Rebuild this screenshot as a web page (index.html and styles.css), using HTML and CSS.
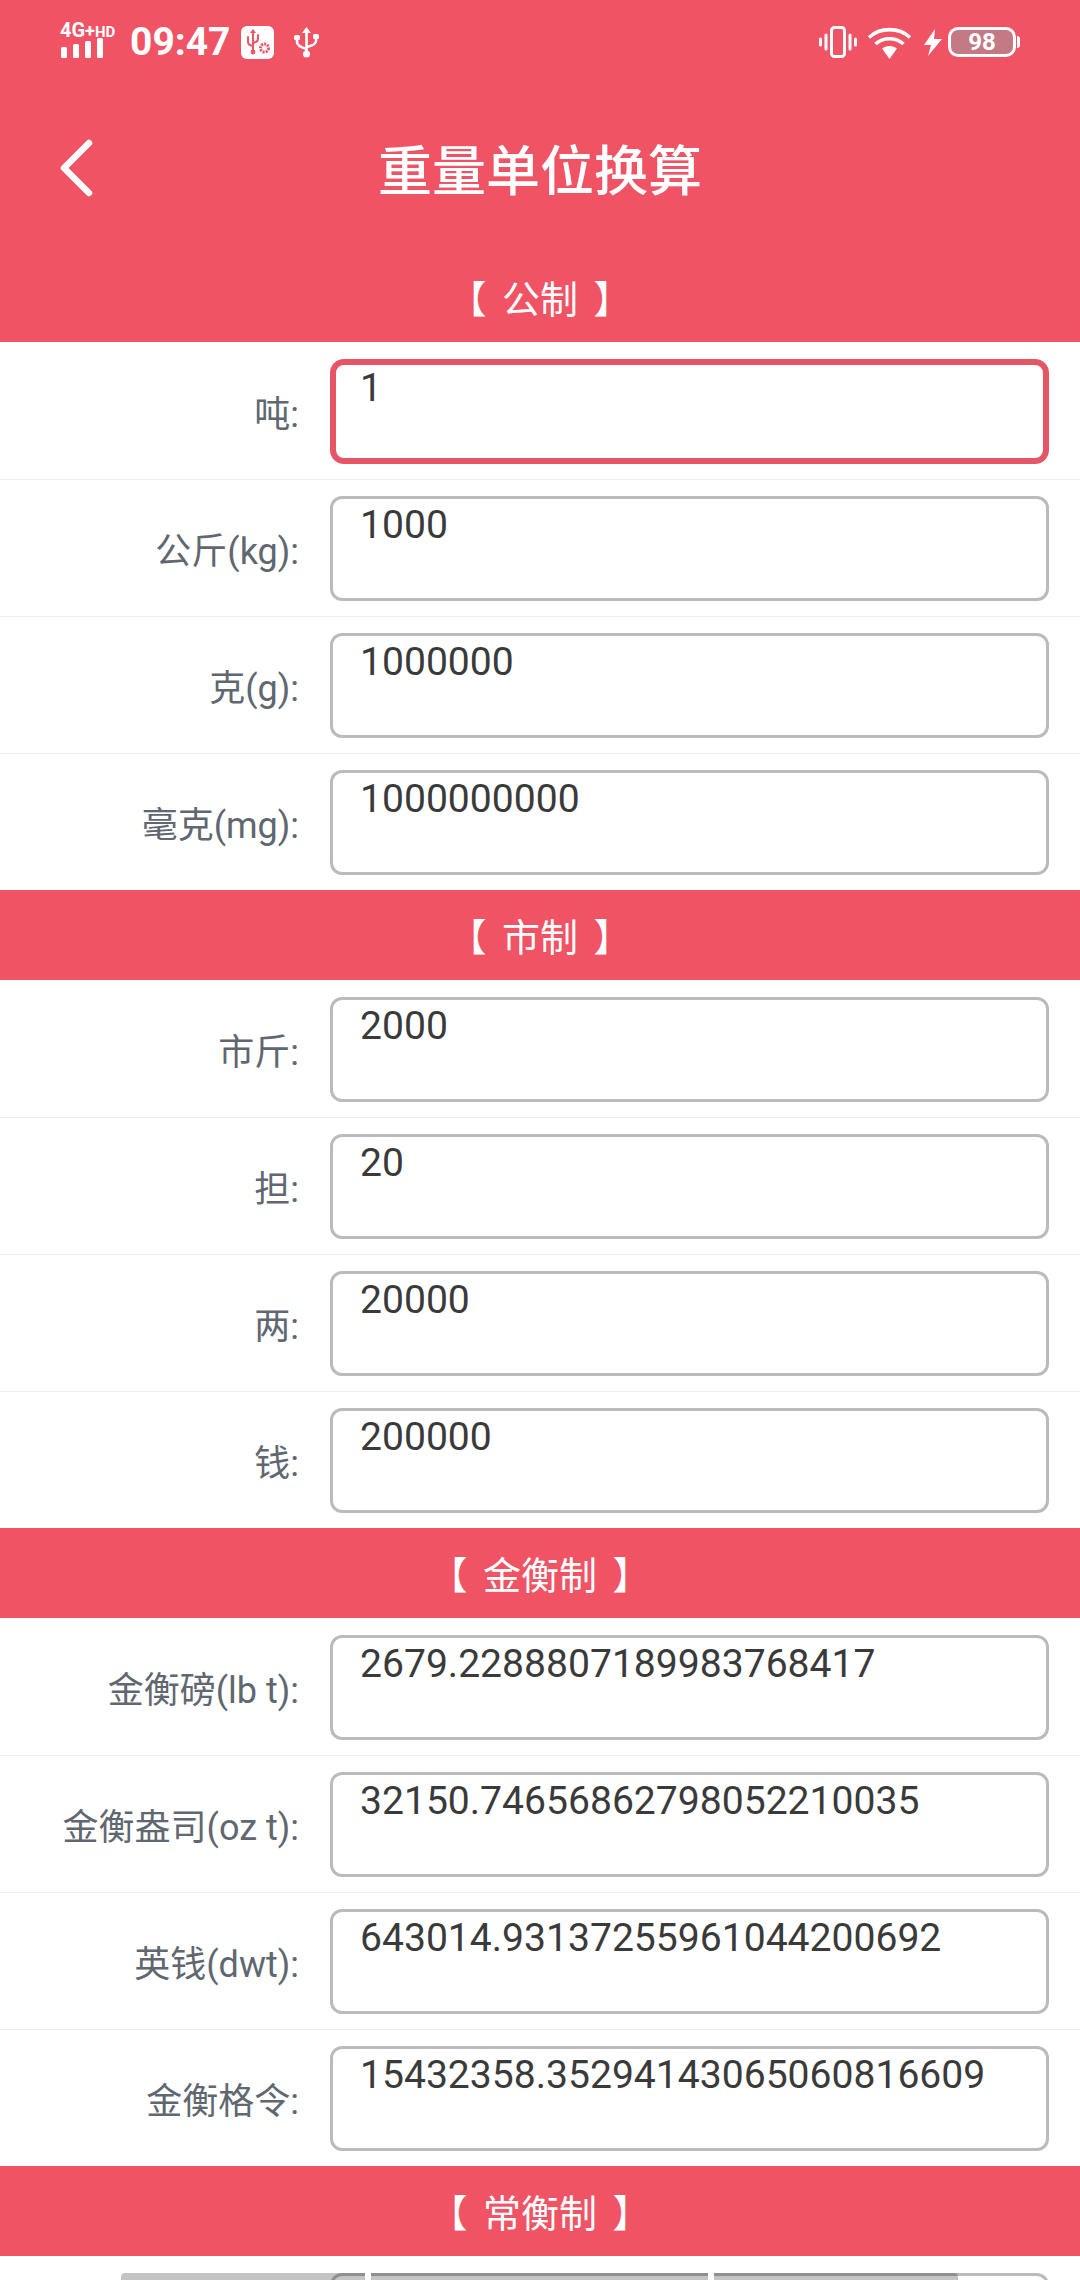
FILE: index.html
```html
<!DOCTYPE html>
<html lang="zh-CN">
<head>
  <meta charset="UTF-8">
  <meta name="viewport" content="width=device-width, initial-scale=1.0">
  <title>重量单位换算</title>
  <link rel="stylesheet" href="styles.css">
</head>
<body>
  <div class="app">
    <div class="status-bar">
      <div class="status-left">
        <div class="signal">
          <div class="net"><span class="net-4g">4G</span><span class="net-plus">+</span><span class="net-hd">HD</span></div>
          <svg class="bars" width="44" height="20" viewBox="0 0 44 20" fill="#fff">
            <rect x="1" y="9" width="6" height="11" rx="1.5"/>
            <rect x="13" y="6" width="6" height="14" rx="1.5"/>
            <rect x="25" y="3" width="6" height="17" rx="1.5"/>
            <rect x="37" y="0" width="6" height="20" rx="1.5"/>
          </svg>
        </div>
        <span class="time">09:47</span>
        <svg class="usb-badge" width="33" height="33" viewBox="0 0 33 33">
          <rect width="33" height="33" rx="6" fill="#fff"/>
          <g fill="none" stroke="#f05364" stroke-width="2" stroke-linecap="round">
            <path d="M12 6v19M7 11v5q0 3 5 4M17 9v4q0 3-5 4"/>
          </g>
          <path d="M12 3l3 4H9z" fill="#f05364"/>
          <circle cx="12" cy="26" r="2.4" fill="#f05364"/>
          <circle cx="23.5" cy="22" r="4" fill="none" stroke="#f05364" stroke-width="3" stroke-dasharray="2 1"/>
        </svg>
        <svg class="usb" width="25" height="31" viewBox="0 0 25 31">
          <g fill="none" stroke="#fff" stroke-width="2.6" stroke-linecap="round">
            <path d="M12.5 5v22M3 11v4q0 4 9.5 7M22 9v5q0 4-9.5 6"/>
          </g>
          <path d="M12.5 0l4.5 6H8z" fill="#fff"/>
          <circle cx="12.5" cy="27" r="3.5" fill="#fff"/>
          <rect x="0" y="8" width="6" height="5" rx="1.5" fill="#fff"/>
          <rect x="19" y="7" width="6" height="5" rx="1.5" fill="#fff"/>
        </svg>
      </div>
      <div class="status-right">
        <svg class="vibrate" width="38" height="32" viewBox="0 0 38 32" fill="none" stroke="#fff">
          <rect x="12.5" y="1.5" width="13" height="29" rx="3" stroke-width="3"/>
          <path d="M7 9v14M31 9v14" stroke-width="3" stroke-linecap="round"/>
          <path d="M1.5 13v6M36.5 13v6" stroke-width="3" stroke-linecap="round"/>
        </svg>
        <svg class="wifi" width="45" height="33" viewBox="0 0 45 33" fill="none" stroke="#fff" stroke-width="3.6">
          <path d="M2 11.5C13 1 32 1 43 11.5"/>
          <path d="M8.5 18C16 11 29 11 36.5 18"/>
          <path d="M15 22.5L22.5 33L30 22.5C26 19 19 19 15 22.5Z" fill="#fff" stroke="none"/>
        </svg>
        <svg class="bolt" width="18" height="27" viewBox="0 0 18 27" fill="#fff">
          <path d="M11 0L0 16h7l-3 11L18 10h-8z"/>
        </svg>
        <div class="battery">
          <div class="battery-body">98</div>
          <div class="battery-nub"></div>
        </div>
      </div>
    </div>

    <div class="title-bar">
      <svg class="back" width="40" height="64" viewBox="0 0 40 64" fill="none" stroke="#fff" stroke-width="6.5" stroke-linecap="round" stroke-linejoin="round">
        <path d="M33 7L8 32l25 25"/>
      </svg>
      <h1>重量单位换算</h1>
    </div>

    <div class="section-title">【 公制 】</div>
    <div class="row"><label>吨:</label><div class="field active">1</div></div>
    <div class="row"><label>公斤(kg):</label><div class="field">1000</div></div>
    <div class="row"><label>克(g):</label><div class="field">1000000</div></div>
    <div class="row"><label>毫克(mg):</label><div class="field">1000000000</div></div>

    <div class="section-title">【 市制 】</div>
    <div class="row"><label>市斤:</label><div class="field">2000</div></div>
    <div class="row"><label>担:</label><div class="field">20</div></div>
    <div class="row"><label>两:</label><div class="field">20000</div></div>
    <div class="row"><label>钱:</label><div class="field">200000</div></div>

    <div class="section-title">【 金衡制 】</div>
    <div class="row"><label>金衡磅(lb t):</label><div class="field">2679.2288807189983768417</div></div>
    <div class="row"><label>金衡盎司(oz t):</label><div class="field">32150.74656862798052210035</div></div>
    <div class="row"><label>英钱(dwt):</label><div class="field">643014.93137255961044200692</div></div>
    <div class="row"><label>金衡格令:</label><div class="field">15432358.35294143065060816609</div></div>

    <div class="section-title">【 常衡制 】</div>
    <div class="row"><label></label><div class="field"></div></div>

    <div class="toolbar-edge">
      <div class="seg seg-first"></div>
      <div class="seg-gap"></div>
      <div class="seg seg-mid"></div>
      <div class="seg-gap"></div>
      <div class="seg seg-last"></div>
    </div>
  </div>
</body>
</html>
```

FILE: styles.css
```css
* {
  box-sizing: border-box;
}
body {
  margin: 0;
  background-color: #fff;
  font-family: Roboto, "Noto Sans CJK SC", sans-serif;
}
.app {
  position: relative;
  width: 1080px;
  height: 2280px;
  overflow: hidden;
}
.status-bar {
  display: flex;
  justify-content: space-between;
  align-items: center;
  height: 84px;
  padding: 0 60px;
  background-color: #f05364;
  color: #fff;
}
.status-left,
.status-right {
  display: flex;
  align-items: center;
}
.signal {
  width: 58px;
  margin-right: 12px;
  margin-bottom: 5px;
}
.net {
  height: 16px;
  line-height: 16px;
  font-weight: 700;
  white-space: nowrap;
}
.net-4g {
  font-size: 20px;
}
.net-plus {
  font-size: 18px;
}
.net-hd {
  font-size: 15px;
}
.bars {
  display: block;
}
.time {
  font-size: 39px;
  font-weight: 700;
  margin-right: 10px;
}
.usb-badge {
  margin-right: 20px;
}
.vibrate {
  margin-right: 10px;
}
.wifi {
  margin-right: 12px;
}
.bolt {
  margin-right: 6px;
}
.battery {
  display: flex;
  align-items: center;
}
.battery-body {
  width: 68px;
  height: 30px;
  border: 3px solid #fff;
  border-radius: 10px;
  background-color: #c47a85;
  color: #fff;
  font-size: 24px;
  font-weight: 700;
  line-height: 24px;
  text-align: center;
}
.battery-nub {
  width: 3px;
  height: 12px;
  margin-left: 1px;
  border-radius: 0 3px 3px 0;
  background-color: #fff;
}
.title-bar {
  position: relative;
  display: flex;
  justify-content: center;
  align-items: center;
  height: 168px;
  padding-bottom: 2px;
  background-color: #f05364;
}
.title-bar h1 {
  margin: 0;
  color: #fff;
  font-size: 54px;
  font-weight: 500;
}
.back {
  position: absolute;
  left: 56px;
  top: 52px;
}
.section-title {
  height: 90px;
  padding-top: 6px;
  line-height: 84px;
  background-color: #f05364;
  color: #fff;
  font-size: 38px;
  word-spacing: 6px;
  text-align: center;
  white-space: pre;
}
.row {
  display: flex;
  align-items: center;
  height: 137px;
  padding: 17px 31px 15px 0;
}
.row + .row {
  padding-top: 16px;
  border-top: 1px solid #eee;
}
.row label {
  width: 299px;
  margin-right: 31px;
  padding-bottom: 1px;
  color: #606770;
  font-size: 36px;
  text-align: right;
  white-space: nowrap;
}
.field {
  flex: 1;
  height: 105px;
  padding: 3px 0 0 27px;
  border: 3px solid #bbb;
  border-radius: 12px;
  color: #3a3a3a;
  font-size: 39.1px;
  line-height: 46px;
  white-space: nowrap;
}
.field.active {
  padding: 0 0 0 24px;
  border: 6px solid #e65566;
  border-radius: 14px;
}
.toolbar-edge {
  position: absolute;
  left: 121px;
  top: 2273px;
  display: flex;
  width: 837px;
  height: 7px;
}
.seg {
  height: 7px;
  background-color: rgba(0, 0, 0, 0.23);
}
.seg-gap {
  width: 6px;
  height: 7px;
  background-color: #fff;
}
.seg-first {
  width: 244px;
  border-radius: 4px 0 0 0;
}
.seg-mid {
  width: 337px;
}
.seg-last {
  width: 244px;
  border-radius: 0 4px 0 0;
}
```
